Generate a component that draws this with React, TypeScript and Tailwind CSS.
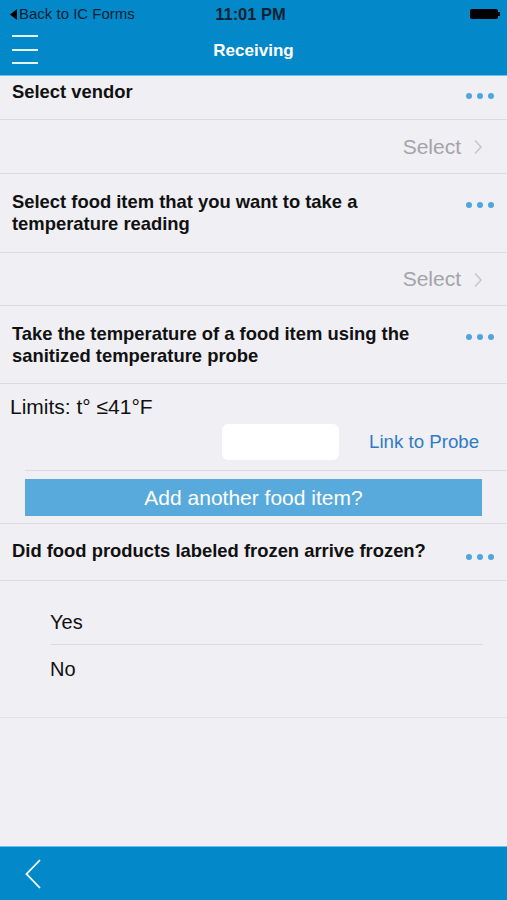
import React from "react";

const font = { fontFamily: '"Liberation Sans", Arial, sans-serif' };

function Dots() {
  return (
    <div className="flex gap-[5px] shrink-0">
      <span className="w-[6px] h-[6px] rounded-full bg-[#4ea6de]" />
      <span className="w-[6px] h-[6px] rounded-full bg-[#4ea6de]" />
      <span className="w-[6px] h-[6px] rounded-full bg-[#4ea6de]" />
    </div>
  );
}

function SelectRow({ h }: { h: string }) {
  return (
    <div className={`${h} flex items-center justify-end pr-[24px] border-b border-[#dcdce0]`}>
      <span className="text-[21px] text-[#a3a3a8]">Select</span>
      <svg width="10" height="16" viewBox="0 0 10 16" className="ml-[12px] mt-[1px]">
        <path d="M2 1.5 L8 8 L2 14.5" fill="none" stroke="#c7c7cc" strokeWidth="1.6" />
      </svg>
    </div>
  );
}

export default function App() {
  return (
    <div className="w-[507px] h-[900px] bg-[#efeff4] flex flex-col overflow-hidden" style={font}>
      {/* Header */}
      <div className="bg-[#0389c9] h-[75px] shrink-0 flex flex-col text-white">
        <div className="h-[27px] flex items-center px-[10px] pt-[1px] relative">
          <span className="flex items-center">
            <svg width="7" height="11" viewBox="0 0 7 11" className="mr-[2px]"><path d="M7 0 L0 5.5 L7 11 Z" fill="#000" /></svg>
            <span className="text-[#0b2233] text-[15px]">Back to IC Forms</span>
          </span>
          <span className="absolute left-0 right-[6px] text-center text-[16.5px] font-bold text-[#0b2233] pointer-events-none">11:01 PM</span>
          <span className="ml-auto mr-[-3px] flex items-center">
            <span className="w-[28px] h-[10px] bg-black rounded-[2px]" />
            <span className="w-[2px] h-[4px] bg-black" />
          </span>
        </div>
        <div className="flex-1 flex items-center relative">
          <div className="absolute left-[12px] top-[8px] flex flex-col gap-[11.5px]">
            <span className="block w-[26px] h-[2px] bg-white/90" />
            <span className="block w-[26px] h-[2px] bg-white/90" />
            <span className="block w-[26px] h-[2px] bg-white/90" />
          </div>
          <div className="w-full text-center text-[17px] font-bold">Receiving</div>
        </div>
      </div>
      <div className="h-[1px] bg-[#6cc0ec] shrink-0" />

      {/* Content */}
      <div className="flex-1 flex flex-col">
        <div className="h-[44px] flex justify-between items-start pl-[12px] pr-[13px] border-b border-[#dcdce0]">
          <div className="text-[18.4px] font-bold text-[#111] leading-[22px] pt-[5px]">Select vendor</div>
          <div className="pt-[17px]"><Dots /></div>
        </div>
        <SelectRow h="h-[54px]" />
        <div className="h-[79px] flex justify-between items-start pl-[12px] pr-[13px] border-b border-[#dcdce0]">
          <div className="text-[18.4px] font-bold text-[#111] leading-[22px] pt-[17px] w-[420px]">
            Select food item that you want to take a temperature reading
          </div>
          <div className="pt-[28px]"><Dots /></div>
        </div>
        <SelectRow h="h-[53px]" />
        <div className="h-[78px] flex justify-between items-start pl-[12px] pr-[13px] border-b border-[#dcdce0]">
          <div className="text-[18.4px] font-bold text-[#111] leading-[22px] pt-[17px] w-[420px]">
            Take the temperature of a food item using the sanitized temperature probe
          </div>
          <div className="pt-[28px]"><Dots /></div>
        </div>

        {/* Limits */}
        <div className="flex flex-col">
          <div className="pl-[10px] pt-[12px] text-[21px] leading-[22px] text-[#111]">Limits: t° ≤41°F</div>
          <div className="flex items-center mt-[6px] h-[36px] ml-[25px] pl-[197px]">
            <div className="w-[117px] h-[36px] bg-white rounded-[6px]" />
            <span className="ml-[30px] text-[18.7px] text-[#2f7bc6]">Link to Probe</span>
          </div>
          <div className="ml-[25px] mt-[10px] h-[1px] bg-[#dcdce0]" />
          <div className="ml-[25px] mr-[25px] mt-[8px] h-[37px] bg-[#59aadc] flex items-center justify-center text-white text-[21px]">
            Add another food item?
          </div>
          <div className="mt-[7px] h-[1px] bg-[#dcdce0]" />
        </div>

        <div className="h-[57px] flex justify-between items-start pl-[12px] pr-[13px] border-b border-[#dcdce0]">
          <div className="text-[18.4px] font-bold text-[#111] leading-[22px] pt-[16px]">
            Did food products labeled frozen arrive frozen?
          </div>
          <div className="pt-[30px]"><Dots /></div>
        </div>

        <div className="border-b border-[#e3e3e7] pb-[24px] pt-[16px]">
          <div className="ml-[50px] mr-[24px] h-[48px] flex items-center text-[20px] text-[#111] border-b border-[#dcdce0] pt-[2px]">Yes</div>
          <div className="ml-[50px] h-[48px] flex items-center text-[20px] text-[#111]">No</div>
        </div>
      </div>

      {/* Footer */}
      <div className="h-[1px] bg-[#6cc0ec] shrink-0" />
      <div className="h-[53px] bg-[#0389c9] shrink-0 flex items-center pl-[25px]">
        <svg width="16" height="30" viewBox="0 0 16 30">
          <path d="M15 1 L1.5 15 L15 29" fill="none" stroke="#fff" strokeWidth="1.8" />
        </svg>
      </div>
    </div>
  );
}
